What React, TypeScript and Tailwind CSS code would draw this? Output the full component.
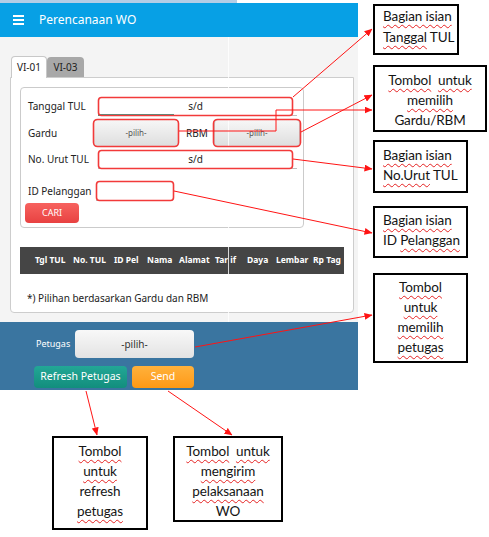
import type { ReactNode } from 'react'

function Hamburger() {
  return (
    <div className="flex w-[11px] flex-col gap-[2.5px]">
      <div className="h-[1.5px] bg-white" />
      <div className="h-[1.5px] bg-white" />
      <div className="h-[1.5px] bg-white" />
    </div>
  )
}

// spell-check squiggle under words in the callouts
function W({ children }: { children: ReactNode }) {
  return (
    <span className="underline decoration-wavy decoration-[#e52222] decoration-1 underline-offset-[3px]">
      {children}
    </span>
  )
}

const headers = [
  { label: 'Tgl TUL', w: 'w-[38px]' },
  { label: 'No. TUL', w: 'w-[41px]' },
  { label: 'ID Pel', w: 'w-[33px]' },
  { label: 'Nama', w: 'w-[32px]' },
  { label: 'Alamat', w: 'w-[36px]' },
  { label: 'Tarif', w: 'w-[32px]' },
  { label: 'Daya', w: 'w-[29px]' },
  { label: 'Lembar', w: 'w-[37px]' },
  { label: 'Rp Tag', w: 'w-[31px]' },
]

function PilihButton({ w }: { w: string }) {
  return (
    <div className={`${w} flex h-full items-center justify-center rounded-[4px] border border-[#c9c9c9] bg-gradient-to-b from-[#f7f7f7] to-[#dedede] text-[8px] text-[#555]`}>
      -pilih-
    </div>
  )
}

function RangeInput({ focused }: { focused?: boolean }) {
  return (
    <div className="flex h-full items-end">
      <div className={`h-full w-[76px] ${focused ? 'border-b-2 border-[#3a9e8c]' : 'border-b border-[#bdbdbd]'}`} />
      <div className="flex h-full w-[43px] items-center justify-center text-[10px] text-[#222]">s/d</div>
      <div className="h-full w-[80px] border-b border-[#bdbdbd]" />
    </div>
  )
}

function Callout({ box, center, children }: { box: string; center?: boolean; children: ReactNode }) {
  return (
    <div
      className={`absolute ${box} whitespace-nowrap border-2 border-black bg-white font-['Lato',sans-serif] text-[13.5px] leading-[20px] tracking-[-0.1px] text-[#141414] ${
        center ? 'text-center' : 'pl-[8px]'
      }`}
    >
      {children}
    </div>
  )
}

export default function App() {
  return (
    <div className="relative h-[537px] w-[489px] overflow-hidden bg-white">
      {/* App screenshot */}
      <div className="w-[358px] font-['Noto_Sans',sans-serif]">
        <div className="flex h-[3px]">
          <div className="w-[237px] bg-[#b3cde6]" />
        </div>
        <div className="flex h-[34px] items-center bg-[#07a0e5] pl-[13px]">
          <Hamburger />
          <span className="ml-[15px] text-[12px] text-white">Perencanaan WO</span>
        </div>

        <div className="h-[285px] bg-[#f4f4f4] pl-[10px] pr-[4px] pt-[19px]">
          {/* Tabs */}
          <div className="flex h-[21px] items-end pl-[1px]">
            <div className="relative z-10 -mb-px flex h-[22px] w-[36px] items-center justify-center rounded-t-[4px] border border-b-0 border-[#c8c8c8] bg-white text-[10px] text-[#222]">
              VI-01
            </div>
            <div className="flex h-[20px] w-[37px] items-center justify-center rounded-t-[4px] bg-[#a8a8a8] text-[10px] text-[#222]">
              VI-03
            </div>
          </div>

          {/* Tab panel */}
          <div className="h-[236px] rounded-b-[4px] border border-[#cdcdcd] bg-white pl-[9px] pt-[9px]">
            {/* Filter form */}
            <div className="h-[141px] w-[284px] rounded-[4px] border border-[#cbcbcb] pl-[7px] pt-[9px] text-[10px] text-[#222]">
              <div className="flex h-[19px] items-center">
                <span className="w-[70px]">Tanggal TUL</span>
                <RangeInput focused />
              </div>
              <div className="mt-[3px] flex h-[28px] items-center">
                <span className="w-[65px]">Gardu</span>
                <PilihButton w="w-[86px]" />
                <span className="w-[35px] pl-[7px]">RBM</span>
                <PilihButton w="w-[86px]" />
              </div>
              <div className="mt-[3px] flex h-[19px] items-center">
                <span className="w-[70px]">No. Urut TUL</span>
                <RangeInput />
              </div>
              <div className="mt-[12px] flex h-[20px] items-center">
                <span className="w-[68px]">ID Pelanggan</span>
                <div className="h-full w-[77px] border-b border-[#bdbdbd]" />
              </div>
              <div className="-ml-[3px] mt-[2px] flex h-[20px] w-[54px] items-center justify-center rounded-[4px] bg-gradient-to-b from-[#f7625f] to-[#e84141] text-[9px] text-white">
                CARI
              </div>
            </div>

            {/* Table header */}
            <div className="mt-[19px] flex h-[27px] w-[324px] items-center bg-[#454545] pl-[15px] text-[8.5px] font-bold text-white">
              {headers.map(h => (
                <span key={h.label} className={`${h.w} whitespace-nowrap`}>
                  {h.label === 'Tarif' ? (
                    <>
                      Tar<span className="ml-[2px]">if</span>
                    </>
                  ) : (
                    h.label
                  )}
                </span>
              ))}
            </div>

            <div className="mt-[18px] pl-[7px] text-[10px] leading-[12px] text-[#222]">
              *) Pilihan berdasarkan Gardu dan RBM
            </div>
          </div>
        </div>

        {/* Petugas bar */}
        <div className="h-[68px] bg-[#3a75a0] pt-[8px]">
          <div className="flex h-[28px] items-center pl-[36px]">
            <span className="w-[39px] text-[9px] text-white">Petugas</span>
            <div className="flex h-full w-[119px] items-center justify-center rounded-[4px] bg-gradient-to-b from-[#f8f8f8] to-[#e3e3e3] text-[10px] text-[#333]">
              -pilih-
            </div>
          </div>
          <div className="mt-[8px] flex h-[22px] gap-[5px] pl-[34px] text-[10.5px] text-white">
            <div className="flex w-[93px] items-center justify-center rounded-[4px] bg-gradient-to-b from-[#22a796] to-[#128e7d]">
              Refresh Petugas
            </div>
            <div className="flex w-[62px] items-center justify-center rounded-[4px] bg-gradient-to-b from-[#ffb13a] to-[#ff9911]">
              Send
            </div>
          </div>
        </div>
      </div>

      {/* seam between the two stitched screenshots */}
      <div className="absolute left-[228px] top-[37px] h-[285px] w-px bg-white/80" />

      {/* Callouts */}
      <Callout box="left-[373px] top-[4px] h-[51px] w-[86px] leading-[21px]">
        <div><W>Bagian isian</W></div>
        <div><W>Tanggal</W> TUL</div>
      </Callout>
      <Callout box="left-[373px] top-[65px] h-[67px] w-[114px] pt-[3px]" center>
        <div><W>Tombol</W>&nbsp; <W>untuk</W></div>
        <div><W>memilih</W></div>
        <div>Gardu/RBM</div>
      </Callout>
      <Callout box="left-[373px] top-[140px] h-[53px] w-[95px] pt-[3px]">
        <div><W>Bagian isian</W></div>
        <div><W>No.Urut</W> TUL</div>
      </Callout>
      <Callout box="left-[373px] top-[206px] h-[52px] w-[95px] pt-[2px]">
        <div><W>Bagian isian</W></div>
        <div>ID <W>Pelanggan</W></div>
      </Callout>
      <Callout box="left-[373px] top-[273px] h-[90px] w-[95px] pt-[2px] leading-[20.5px]" center>
        <div><W>Tombol</W></div>
        <div><W>untuk</W></div>
        <div><W>memilih</W></div>
        <div><W>petugas</W></div>
      </Callout>
      <Callout box="left-[52px] top-[436px] h-[94px] w-[96px] pt-[3px]" center>
        <div><W>Tombol</W></div>
        <div><W>untuk</W></div>
        <div>refresh</div>
        <div><W>petugas</W></div>
      </Callout>
      <Callout box="left-[173px] top-[436px] h-[86px] w-[110px] pt-[3px]" center>
        <div><W>Tombol</W>&nbsp; <W>untuk</W></div>
        <div><W>mengirim</W></div>
        <div><W>pelaksanaan</W></div>
        <div>WO</div>
      </Callout>

      {/* Red annotation marks */}
      <svg className="pointer-events-none absolute left-0 top-0" width={489} height={537}>
        <defs>
          <marker id="ah" markerWidth="8" markerHeight="7" refX="7.5" refY="3.5" orient="auto" markerUnits="userSpaceOnUse">
            <path d="M0,0 L8,3.5 L0,7 Z" fill="#ff1414" />
          </marker>
        </defs>
        <g fill="none" stroke="#f23a3a" strokeWidth="1.6">
          <rect x="98.5" y="97.5" width="194" height="18" rx="3" />
          <rect x="93.5" y="119.5" width="85" height="27" rx="4" />
          <rect x="213.5" y="119.5" width="87" height="27" rx="4" />
          <rect x="98.5" y="150.5" width="194" height="18" rx="3" />
          <rect x="96.5" y="181.5" width="77" height="19" rx="3" />
        </g>
        <g fill="none" stroke="#ff1414" strokeWidth="1">
          <line x1="293" y1="97" x2="372" y2="29" markerEnd="url(#ah)" />
          <polyline points="179,131 276,131 276,110 372,110" markerEnd="url(#ah)" />
          <line x1="301" y1="132" x2="372" y2="95" markerEnd="url(#ah)" />
          <line x1="293" y1="159" x2="372" y2="169" markerEnd="url(#ah)" />
          <line x1="174" y1="191" x2="372" y2="233" markerEnd="url(#ah)" />
          <line x1="195" y1="347" x2="372" y2="315" markerEnd="url(#ah)" />
          <line x1="86" y1="391" x2="97" y2="435" markerEnd="url(#ah)" />
          <line x1="168" y1="391" x2="232" y2="435" markerEnd="url(#ah)" />
        </g>
      </svg>
    </div>
  )
}
